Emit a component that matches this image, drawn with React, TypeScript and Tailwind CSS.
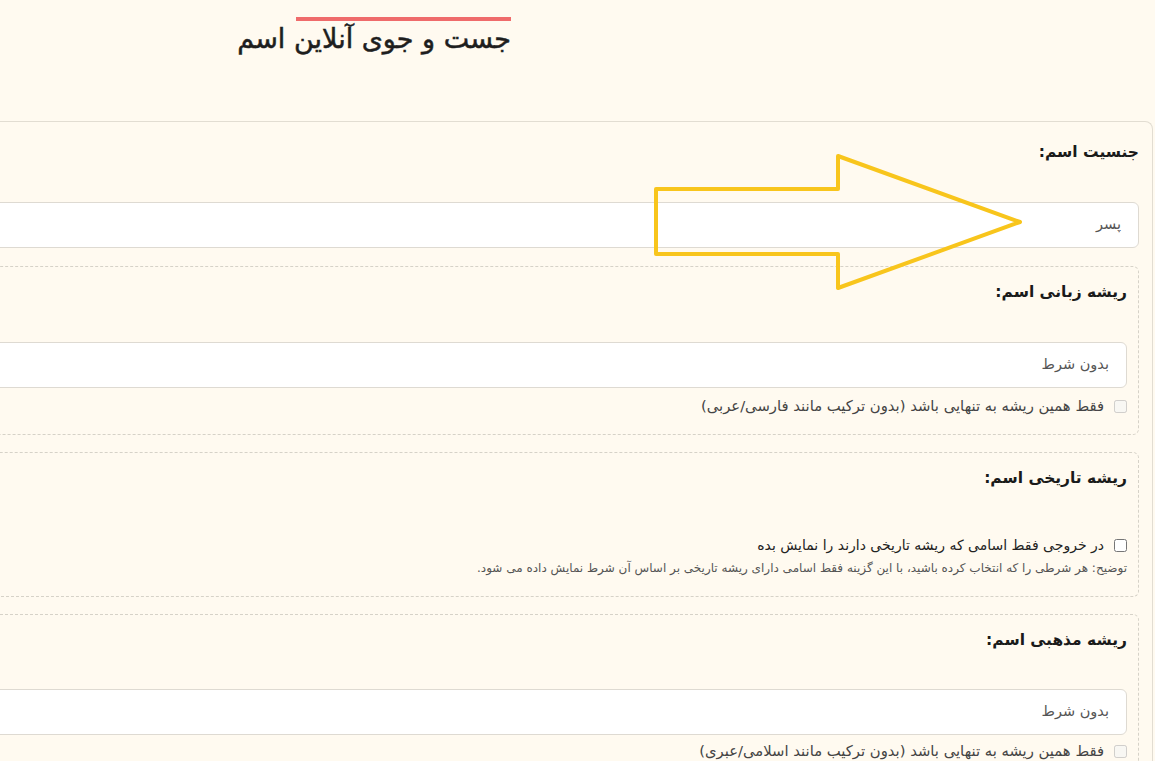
import React from "react";

function Field({ value }: { value: string }) {
  return (
    <div className="h-[46px] bg-white border border-[#dedad2] rounded-md flex items-center pr-[17px] text-[14.5px] text-[#555]">
      {value}
    </div>
  );
}

function CheckRow({ label, disabled, className }: { label: string; disabled?: boolean; className?: string }) {
  return (
    <label className={`flex items-center gap-[10px] h-[20px] text-[14.8px] text-[#444] ${className ?? ""}`}>
      <input type="checkbox" disabled={disabled} className="w-[13px] h-[13px] m-0 shrink-0" />
      <span>{label}</span>
    </label>
  );
}

function Box({ children, className }: { children: React.ReactNode; className?: string }) {
  return (
    <div className={`border border-dashed border-[#d6d2c8] rounded-md pr-[11px] pt-[13px] ${className ?? ""}`}>
      {children}
    </div>
  );
}

export default function App() {
  return (
    <div dir="rtl" className="relative min-h-screen w-full overflow-hidden bg-[#fffaf0] font-['DejaVu_Sans',sans-serif] text-[#222]">
      {/* Header */}
      <header className="h-[121px] pt-[17px] mr-[644px]">
        <div className="w-[215px] h-[4px] bg-[#ef6b6b]" />
        <h1 className="mt-[2px] text-[27px] leading-[32px] font-normal text-[#1e1e1e] [-webkit-text-stroke:0.5px_#1e1e1e] whitespace-nowrap">جست و جوی آنلاین اسم</h1>
      </header>

      {/* Form card */}
      <div className="w-[1700px] mr-[2px] border border-b-0 border-[#e2ddd2] rounded-t-lg pr-[13px] pt-[18px] pb-[40px]">
        <div className="text-[15.5px] leading-[24px] font-bold text-[#1a1a1a]">جنسیت اسم:</div>
        <div className="mt-[38px]">
          <Field value="پسر" />
        </div>

        <Box className="mt-[18px] pb-[18px]">
          <div className="text-[15.5px] leading-[24px] font-bold text-[#1a1a1a]">ریشه زبانی اسم:</div>
          <div className="mt-[38px]">
            <Field value="بدون شرط" />
          </div>
          <CheckRow disabled className="mt-[8px]" label="فقط همین ریشه به تنهایی باشد (بدون ترکیب مانند فارسی/عربی)" />
        </Box>

        <Box className="mt-[17px] pb-[19px]">
          <div className="text-[15.5px] leading-[24px] font-bold text-[#1a1a1a]">ریشه تاریخی اسم:</div>
          <CheckRow className="mt-[45px] !text-[14px] !text-[#222]" label="در خروجی فقط اسامی که ریشه تاریخی دارند را نمایش بده" />
          <p className="mt-[4px] text-[12px] leading-[18px] text-[#555] whitespace-nowrap">
            توضیح: هر شرطی را که انتخاب کرده باشید، با این گزینه فقط اسامی دارای ریشه تاریخی بر اساس آن شرط نمایش داده می شود.
          </p>
        </Box>

        <Box className="mt-[17px] pb-[18px]">
          <div className="text-[15.5px] leading-[24px] font-bold text-[#1a1a1a]">ریشه مذهبی اسم:</div>
          <div className="mt-[37px]">
            <Field value="بدون شرط" />
          </div>
          <CheckRow disabled className="mt-[6px]" label="فقط همین ریشه به تنهایی باشد (بدون ترکیب مانند اسلامی/عبری)" />
        </Box>
      </div>

      {/* Highlight arrow */}
      <svg className="absolute left-[650px] top-[150px] pointer-events-none" width="380" height="145" viewBox="650 150 380 145">
        <polygon
          points="656,189 838,189 838,156 1020,222 838,288 838,254 656,254"
          fill="none"
          stroke="#f8c51c"
          strokeWidth="4"
          strokeLinejoin="round"
        />
      </svg>
    </div>
  );
}
